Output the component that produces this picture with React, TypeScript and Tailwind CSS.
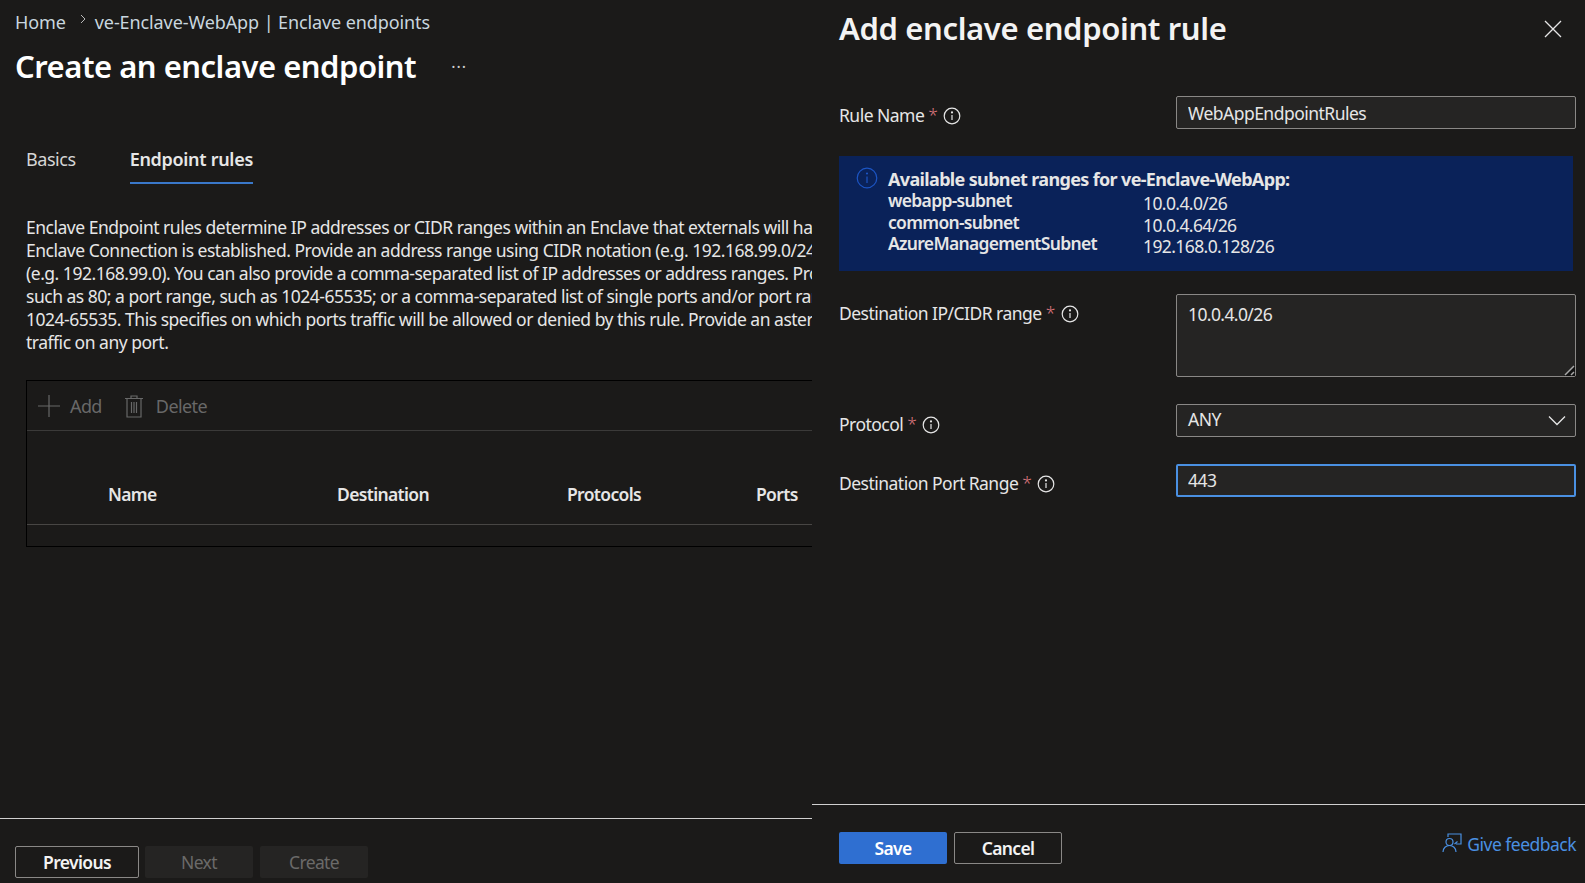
const font = "font-['Noto_Sans',sans-serif]";

const InfoIcon = () => (
  <svg width="18" height="18" viewBox="0 0 18 18" fill="none" stroke="#e6e6e6" strokeWidth="1.2" className="shrink-0">
    <circle cx="9" cy="9" r="7.8" />
    <path d="M9 8v5" />
    <circle cx="9" cy="5.4" r="0.5" fill="#e6e6e6" />
  </svg>
);

const Label = ({ text }: { text: string }) => (
  <div className="flex items-center text-[17.5px] leading-6 text-[#e6e6e6] tracking-[-0.52px]">
    <span>{text}</span>
    <span className="ml-[4px] font-light text-[#d9747c]">*</span>
    <span className="ml-[6px] mt-[2px]">
      <InfoIcon />
    </span>
  </div>
);

const inputClass =
  "block w-[400px] h-[33px] rounded-[2px] border border-[#8a8886] bg-[#252423] px-[11px] text-[17.5px] tracking-[-0.52px] text-[#e6e6e6] outline-none";

const descriptionLines = [
  "Enclave Endpoint rules determine IP addresses or CIDR ranges within an Enclave that externals will have access to",
  "Enclave Connection is established. Provide an address range using CIDR notation (e.g. 192.168.99.0/24) or an IP address",
  "(e.g. 192.168.99.0). You can also provide a comma-separated list of IP addresses or address ranges. Provide a single port,",
  "such as 80; a port range, such as 1024-65535; or a comma-separated list of single ports and/or port ranges, such as 80,",
  "1024-65535. This specifies on which ports traffic will be allowed or denied by this rule. Provide an asterisk (*) to allow",
  "traffic on any port.",
];

const subnets = [
  ["webapp-subnet", "10.0.4.0/26"],
  ["common-subnet", "10.0.4.64/26"],
  ["AzureManagementSubnet", "192.168.0.128/26"],
];

export default function App() {
  return (
    <div className={`${font} flex h-[883px] w-[1585px] overflow-hidden bg-[#1b1a19] [color-scheme:dark]`}>
      {/* blade behind the panel */}
      <div className="flex w-[812px] shrink-0 flex-col overflow-hidden">
        <div className="flex h-[44px] items-center pl-[15px] text-[18px] tracking-[-0.1px] text-[#c9d6df]">
          <span>Home</span>
          <svg width="8" height="10" viewBox="0 0 8 10" fill="none" stroke="#b8b8b8" className="ml-[13px] mr-[8px] mb-[6px]">
            <path d="M2 1l4 4-4 4" />
          </svg>
          <span>ve-Enclave-WebApp | Enclave endpoints</span>
        </div>
        <div className="flex h-[44px] items-center pl-[15px]">
          <h1 className="text-[31px] font-semibold tracking-[-0.5px] text-white">Create an enclave endpoint</h1>
          <span className="ml-[35px] mt-[2px] text-[16px] leading-none tracking-[1px] text-[#d0d0d0]">···</span>
        </div>
        <div className="mt-[49px] flex h-[47px] pl-[26px] text-[18px] tracking-[-0.45px] text-[#d6d6d6]">
          <div className="pt-[9px]">Basics</div>
          <div className="ml-[54px] h-[47px] border-b-2 border-[#3a78c9] pt-[9px] font-semibold tracking-[-0.3px] text-[#e6e6e6]">
            Endpoint rules
          </div>
        </div>
        <div className="mt-[32px] whitespace-nowrap pl-[26px] text-[17.5px] leading-[23px] tracking-[-0.49px] text-[#e6e6e6]">
          {descriptionLines.map((line) => (
            <div key={line}>{line}</div>
          ))}
        </div>
        <div className="ml-[26px] mt-[26px] h-[167px] w-[800px] border border-black">
          <div className="flex h-[50px] items-center border-b border-[#3b3a39] pl-[10px] pt-[1px] text-[18px] tracking-[-0.6px] text-[#686868]">
            <svg width="24" height="24" viewBox="0 0 24 24" fill="none" stroke="#686868" strokeWidth="1.2">
              <path d="M12 1v22M1 12h22" />
            </svg>
            <span className="ml-[9px]">Add</span>
            <svg width="20" height="24" viewBox="0 0 20 24" fill="none" stroke="#686868" strokeWidth="1.2" className="ml-[22px]">
              <path d="M1 4.500h18M7 4.500V2h6v2.500M3 4.500V23h14V4.500M7.500 8v11M10 8v11M12.500 8v11" />
            </svg>
            <span className="ml-[12px]">Delete</span>
          </div>
          <div className="flex h-[94px] items-center border-b border-[#484644] pl-[81px] pt-[34px] text-[17.5px] font-semibold tracking-[-0.65px] text-[#e6e6e6]">
            <div className="w-[229px]">Name</div>
            <div className="w-[230px]">Destination</div>
            <div className="w-[189px]">Protocols</div>
            <div>Ports</div>
          </div>
        </div>
        <div className="mt-auto flex h-[65px] gap-[7px] border-t border-[#d0d0d0] pl-[15px] pt-[27px] text-[17.5px] font-semibold tracking-[-0.65px]">
          <div className="-mr-[1px] flex h-[32px] w-[124px] items-center justify-center rounded-[2px] border border-[#8a8886] text-[#f3f3f3]">
            Previous
          </div>
          <div className="flex h-[32px] w-[108px] items-center justify-center rounded-[2px] bg-[#252423] font-normal text-[#6b6a69]">
            Next
          </div>
          <div className="flex h-[32px] w-[108px] items-center justify-center rounded-[2px] bg-[#252423] font-normal text-[#6b6a69]">
            Create
          </div>
        </div>
      </div>

      {/* right side panel */}
      <div className="flex w-[773px] shrink-0 flex-col">
        <div className="flex h-[58px] items-center justify-between pl-[27px] pr-[23px]">
          <h2 className="mb-[2px] text-[31px] font-semibold tracking-[-0.36px] text-[#f3f3f3]">Add enclave endpoint rule</h2>
          <svg width="18" height="18" viewBox="0 0 18 18" fill="none" stroke="#e6e6e6" strokeWidth="1.3">
            <path d="M1 1l16 16M17 1L1 17" />
          </svg>
        </div>
        <div className="flex-1 pl-[27px]">
          <div className="mt-[38px] grid grid-cols-[337px_400px] items-center">
            <div className="pt-[4px]">
              <Label text="Rule Name" />
            </div>
            <input readOnly value="WebAppEndpointRules" className={inputClass} />
          </div>
          <div className="mt-[27px] flex h-[115px] w-[734px] bg-[#0a2259] pl-[17px] pt-[12px] text-[17.5px] tracking-[-0.52px] text-[#e6e6e6]">
            <svg width="22" height="22" viewBox="0 0 22 22" fill="none" stroke="#1c55c4" strokeWidth="1.2" className="-mt-[1px] shrink-0">
              <circle cx="11" cy="11" r="9.8" />
              <path d="M11 9.500v6.500" />
              <circle cx="11" cy="6.500" r="0.5" fill="#1c55c4" />
            </svg>
            <div className="ml-[10px]">
              <div className="text-[18px] font-bold leading-[23px] tracking-[-0.65px]">Available subnet ranges for ve-Enclave-WebApp:</div>
              <div className="-mt-[1px]">
                {subnets.map(([name, range]) => (
                  <div key={name} className="flex h-[21.5px] leading-[21.5px]">
                    <div className="w-[255px] font-semibold tracking-[-0.7px]">{name}</div>
                    <div className="mt-[3px] tracking-[-0.6px]">{range}</div>
                  </div>
                ))}
              </div>
            </div>
          </div>
          <div className="mt-[23px] grid grid-cols-[337px_400px] items-start">
            <div className="pt-[7px]">
              <Label text="Destination IP/CIDR range" />
            </div>
            <div className="relative">
              <textarea
                readOnly
                value="10.0.4.0/26"
                className="block h-[83px] w-[400px] resize-none rounded-[2px] border border-[#8a8886] bg-[#252423] px-[11px] py-[6px] text-[17.5px] tracking-[-0.6px] text-[#e6e6e6] outline-none"
              />
              <svg width="11" height="11" viewBox="0 0 11 11" className="absolute bottom-[1px] right-[1px]">
                <path d="M11 0v11H0z" fill="#111" />
                <path d="M1 10l9-9M7 10l3-3" stroke="#a8a8a8" strokeWidth="1.5" />
              </svg>
            </div>
          </div>
          <div className="mt-[27px] grid grid-cols-[337px_400px] items-center">
            <div className="pt-[6px]">
              <Label text="Protocol" />
            </div>
            <div className="flex h-[33px] w-[400px] items-center justify-between rounded-[2px] border border-[#8a8886] bg-[#252423] pb-[2px] pl-[11px] pr-[9px] text-[17.5px] tracking-[-0.52px] text-[#e6e6e6]">
              <span>ANY</span>
              <svg width="18" height="11" viewBox="0 0 18 11" fill="none" stroke="#e6e6e6" strokeWidth="1.3" className="mt-[2px]">
                <path d="M1 1.500l8 8 8-8" />
              </svg>
            </div>
          </div>
          <div className="mt-[27px] grid grid-cols-[337px_400px] items-center">
            <div className="pt-[4px]">
              <Label text="Destination Port Range" />
            </div>
            <input
              readOnly
              value="443"
              className="block h-[33px] w-[400px] rounded-[2px] border-2 border-[#4a90e2] bg-[#252423] px-[10px] pb-[2px] text-[17.5px] tracking-[-0.52px] text-[#e6e6e6] outline-none"
            />
          </div>
        </div>
        <div className="flex h-[79px] items-start justify-between border-t border-[#d0d0d0] pl-[27px] pr-[9px] pt-[27px] text-[17.5px] tracking-[-0.52px]">
          <div className="flex gap-[7px] font-semibold tracking-[-0.65px]">
            <div className="flex h-[32px] w-[108px] items-center justify-center rounded-[2px] bg-[#2f6fd1] text-white">Save</div>
            <div className="flex h-[32px] w-[108px] items-center justify-center rounded-[2px] border border-[#8a8886] text-[#f3f3f3]">
              Cancel
            </div>
          </div>
          <div className="-mt-[1px] flex items-center text-[#4a90e2]">
            <svg width="20" height="20" viewBox="0 0 20 20" fill="none" stroke="#4a90e2" strokeWidth="1.2" className="-mt-[3px]">
              <path d="M6 4V1h13v10h-5M12.500 11l3-2.500" />
              <circle cx="7.500" cy="9" r="3.500" />
              <path d="M1 19c0-4 3-6.500 6.500-6.500S14 15 14 19" />
            </svg>
            <span className="ml-[5px]">Give feedback</span>
          </div>
        </div>
      </div>
    </div>
  );
}
